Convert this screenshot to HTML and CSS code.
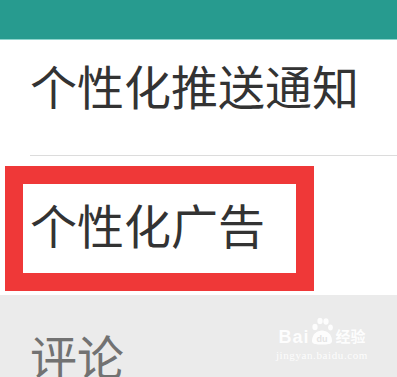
FILE: index.html
```html
<!DOCTYPE html>
<html lang="zh">
<head>
<meta charset="utf-8">
<link rel="stylesheet" href="styles.css">
</head>
<body>
<div class="topbar"></div>
<div class="row first">
  <div class="label">个性化推送通知</div>
</div>
<div class="divider"></div>
<div class="row second">
  <div class="highlight">
    <div class="label">个性化广告</div>
  </div>
</div>
<div class="row gray">
  <div class="label muted">评论</div>
  <div class="watermark">
    <div class="wm-top"><span class="wm-bai">Bai</span><span class="wm-paw"><svg width="24" height="28" viewBox="0 0 24 28"><ellipse cx="5" cy="10" rx="2.6" ry="3.2" fill="#fff"/><ellipse cx="10" cy="4" rx="2.6" ry="3.2" fill="#fff"/><ellipse cx="16" cy="4.5" rx="2.6" ry="3.2" fill="#fff"/><ellipse cx="20.5" cy="10.5" rx="2.4" ry="3" fill="#fff"/><path d="M2 24 C2 17 7 13.5 12 13.5 C17 13.5 22 17 22 24 C22 27.5 17 27.5 12 27.5 C7 27.5 2 27.5 2 24 Z" fill="#fff"/><text x="12" y="25" font-size="9" font-family="Liberation Sans, sans-serif" font-weight="bold" fill="#e3e3e3" text-anchor="middle">du</text></svg></span><span class="wm-cn">经验</span></div>
    <div class="wm-url">jingyan.baidu.com</div>
  </div>
</div>
</body>
</html>
```
FILE: styles.css
```css
html, body {
  margin: 0;
  padding: 0;
  background: #ffffff;
  font-family: "Noto Sans CJK SC", "Noto Sans", sans-serif;
  overflow: hidden;
}
.topbar {
  height: 39px;
  background: #279b8f;
  border-bottom: 1px solid #8ed4cc;
}
.label {
  font-size: 47px;
  line-height: 46px;
  color: #333333;
  white-space: nowrap;
}
.row.first {
  height: 115px;
  box-sizing: border-box;
  padding: 22px 0 0 30px;
}
.divider {
  height: 1px;
  margin-left: 30px;
  background: #dcdcdc;
}
.row.second {
  padding: 10px 0 0 5px;
  height: 139px;
  box-sizing: border-box;
}
.highlight {
  width: 273px;
  height: 89px;
  border: 18px solid #ef3838;
  box-sizing: content-box;
  padding: 0;
}
.highlight .label {
  padding: 17px 0 0 7px;
}
.row.gray {
  background: #ebebeb;
  height: 82px;
  display: flex;
  justify-content: space-between;
  padding: 37px 29px 0 30px;
  box-sizing: border-box;
}
.label.muted {
  color: #727272;
}
.watermark {
  display: flex;
  flex-direction: column;
  align-items: center;
  margin-top: -15px;
  opacity: 0.92;
}
.wm-top {
  display: flex;
  align-items: flex-end;
  height: 28px;
  color: #ffffff;
}
.wm-bai {
  font-family: "Liberation Sans", sans-serif;
  font-weight: bold;
  font-size: 18px;
  line-height: 16px;
  letter-spacing: 1px;
  margin-right: 1px;
}
.wm-paw svg {
  display: block;
}
.wm-cn {
  font-size: 15px;
  line-height: 18px;
  font-weight: bold;
  margin-left: 1px;
}
.wm-url {
  font-family: "Liberation Serif", serif;
  font-size: 11px;
  line-height: 12px;
  color: #ffffff;
  margin-top: 4px;
  letter-spacing: 0.6px;
}
```
